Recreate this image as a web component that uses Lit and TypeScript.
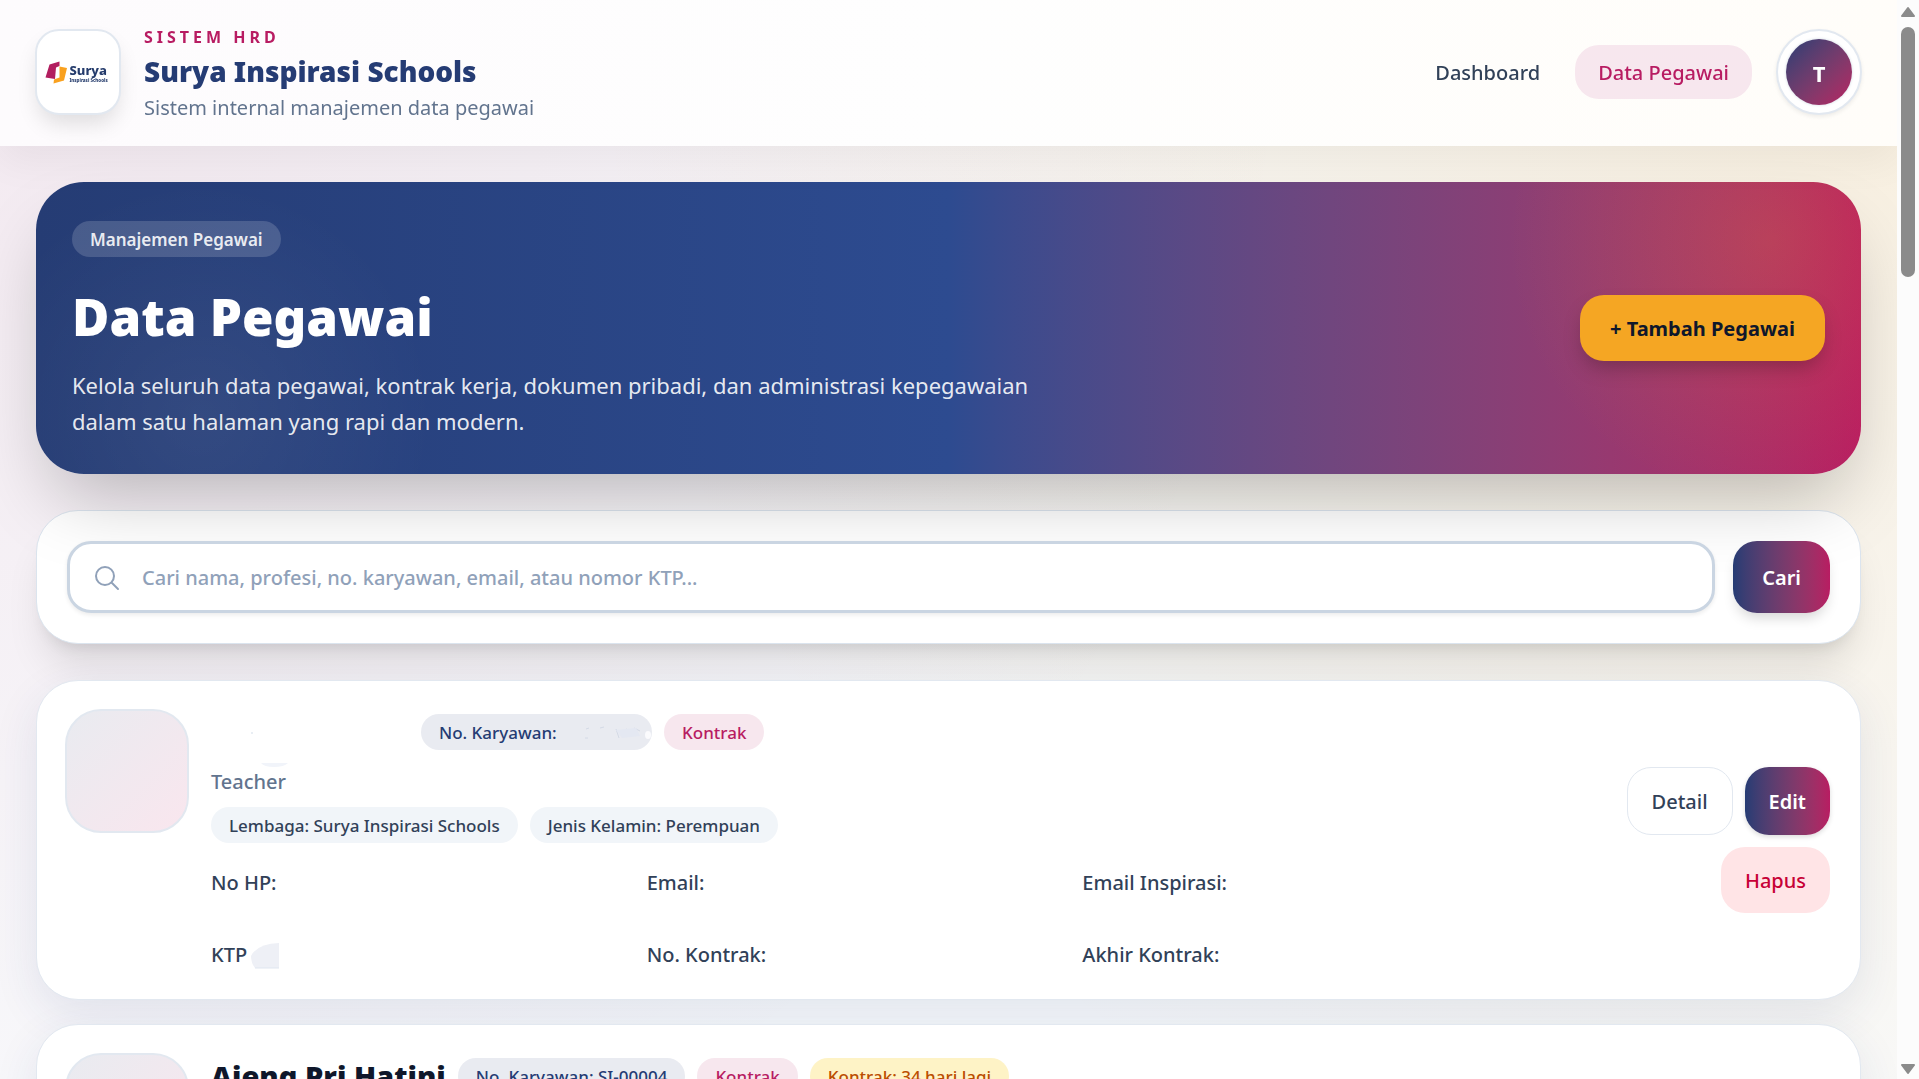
import { LitElement, html, css, svg, nothing } from "lit";
import { customElement, property } from "lit/decorators.js";
import { classMap } from "lit/directives/class-map.js";

interface Tag {
  text: string;
  tone: "navy" | "pink" | "amber" | "slate";
}

interface Employee {
  name: string;
  number: string;
  status: Tag[];
  role: string;
  tags: Tag[];
  hiddenData: boolean;
}

const EMPLOYEES: Employee[] = [
  {
    name: "",
    number: "",
    status: [{ text: "Kontrak", tone: "pink" }],
    role: "Teacher",
    tags: [
      { text: "Lembaga: Surya Inspirasi Schools", tone: "slate" },
      { text: "Jenis Kelamin: Perempuan", tone: "slate" },
    ],
    hiddenData: true,
  },
  {
    name: "Ajeng Pri Hatini",
    number: "SI-00004",
    status: [
      { text: "Kontrak", tone: "pink" },
      { text: "Kontrak: 34 hari lagi", tone: "amber" },
    ],
    role: "Teacher",
    tags: [{ text: "Lembaga: Surya Inspirasi Schools", tone: "slate" }],
    hiddenData: false,
  },
];

const shared = css`
  * {
    box-sizing: border-box;
  }
  h1,
  h2,
  p {
    margin: 0;
  }
  a {
    color: inherit;
    text-decoration: none;
  }
  button {
    font: inherit;
    border: 0;
    cursor: pointer;
  }
  .pill {
    display: inline-flex;
    align-items: center;
    height: 36px;
    padding: 1px 18px 0;
    border-radius: 18px;
    font-size: 17px;
    font-weight: 500;
    white-space: nowrap;
  }
  .navy {
    background: #e9ebf1;
    color: #253c74;
  }
  .pink {
    background: #f7e7ee;
    color: #b81c62;
  }
  .amber {
    background: #fef3c6;
    color: #bb4d00;
  }
  .slate {
    background: #f1f5f9;
    color: #314158;
  }
`;

@customElement("employee-card")
export class EmployeeCard extends LitElement {
  @property({ attribute: false }) employee!: Employee;

  static styles = [
    shared,
    css`
      :host {
        display: block;
      }
      .card {
        display: flex;
        gap: 22px;
        padding: 28px 30px 28px 28px;
        background: #fff;
        border: 1px solid #e2e8f0;
        border-radius: 42px;
        box-shadow: 0 15px 45px rgba(37, 60, 116, 0.1);
      }
      .photo {
        flex: none;
        width: 124px;
        height: 124px;
        border: 2px solid #e2e8f0;
        border-radius: 36px;
        background: linear-gradient(135deg in oklab, #e9ebf0, #f9e6ee);
      }
      .body {
        flex: 1;
        min-width: 0;
      }
      .head {
        display: flex;
        align-items: center;
        gap: 12px;
        height: 46px;
      }
      .name {
        font-size: 29px;
        line-height: 46px;
        font-weight: 900;
        color: #0f172b;
        white-space: nowrap;
      }
      .name-blank {
        width: 198px;
        align-self: flex-end;
        overflow: visible;
      }
      .smear {
        display: block;
      }
      .number-blank {
        width: 231px;
        justify-content: space-between;
        padding-right: 0;
      }
      .role {
        margin-top: 12px;
        font-size: 20px;
        line-height: 30px;
        font-weight: 500;
        color: #62748e;
      }
      .tags {
        display: flex;
        gap: 12px;
        margin-top: 10px;
      }
      .details {
        display: grid;
        grid-template-columns: repeat(3, 1fr);
        grid-template-rows: minmax(60px, auto) auto;
        gap: 12px 18px;
        margin-top: 24px;
        font-size: 20px;
        line-height: 32px;
        font-weight: 500;
        color: #314158;
      }
      .with-mark {
        display: flex;
        align-items: center;
        gap: 4px;
      }
      .actions {
        display: flex;
        flex-wrap: wrap;
        justify-content: flex-end;
        align-content: center;
        gap: 12px;
        width: 308px;
        font-size: 20px;
        font-weight: 500;
        line-height: 30px;
      }
      .btn {
        padding: 19px 24px 17px;
        border-radius: 24px;
      }
      .detail {
        border: 1px solid #e2e8f0;
        background: #fff;
        color: #314158;
      }
      .edit {
        display: flex;
        align-items: center;
        background: linear-gradient(90deg in oklab, #253c74, #b81c62);
        color: #fff;
        font-weight: 600;
        box-shadow: 0 2px 5px rgba(0, 0, 0, 0.14);
      }
      .hapus {
        background: #ffe4e6;
        color: #c70036;
      }
    `,
  ];

  render() {
    const e = this.employee;
    return html`
      <article class="card">
        <div class="photo"></div>
        <div class="body">
          <div class="head">
            ${e.name
              ? html`<h2 class="name">${e.name}</h2>`
              : html`<svg class="name-blank smear" height="30" viewBox="0 0 198 30" aria-hidden="true">
                  <circle cx="41" cy="8" r="1" fill="#e2e8f0" />
                  <path d="M50 38h27q-4 4-14 4t-13-4z" fill="#f1f4fa" />
                </svg>`}
            <span class=${classMap({ pill: true, navy: true, "number-blank": !e.number })}
              >${e.number
                ? `No. Karyawan: ${e.number}`
                : html`No. Karyawan:
                    <svg class="smear" width="80" height="24" viewBox="0 0 80 24" aria-hidden="true">
                      <path
                        d="M14 8l3-1M28 7l4-1M13 17l3 0M44 8l3 9M54 8l4 2M62 7l6 3"
                        stroke="#d4dae6"
                        stroke-width="1"
                      />
                      <path d="M44 9l20-2 4 8-18 2z" fill="#e4e8f2" />
                      <ellipse cx="76" cy="14" rx="3" ry="4" fill="#fbfbfd" />
                    </svg>`}</span
            >
            ${e.status.map((t) => html`<span class="pill ${t.tone}">${t.text}</span>`)}
          </div>
          <p class="role">${e.role}</p>
          <div class="tags">${e.tags.map((t) => html`<span class="pill ${t.tone}">${t.text}</span>`)}</div>
          <div class="details">
            <div>No HP:</div>
            <div>Email:</div>
            <div>Email Inspirasi:</div>
            <div class="with-mark">
              KTP${e.hiddenData
                ? html`<svg class="smear" width="29" height="28" viewBox="0 0 29 28" aria-hidden="true">
                    <path d="M0 15Q6 3 28 2V27H4Q0 22 0 15z" fill="#eef0f6" />
                    <path d="M4 27h24" stroke="#dfe6f0" />
                  </svg>`
                : nothing}
            </div>
            <div>No. Kontrak:</div>
            <div>Akhir Kontrak:</div>
          </div>
        </div>
        <div class="actions">
          <a class="btn detail" href="#detail">Detail</a>
          <a class="btn edit" href="#edit">Edit</a>
          <button class="btn hapus" type="button">Hapus</button>
        </div>
      </article>
    `;
  }
}

@customElement("app-root")
export class AppRoot extends LitElement {
  static styles = [
    shared,
    css`
      :host {
        display: grid;
        grid-template-columns: minmax(0, 1fr) 22px;
        height: 100vh;
        overflow: hidden;
        font-family: "Noto Sans", "Open Sans", sans-serif;
        color: #314158;
      }
      .page {
        height: 100vh;
        overflow-y: auto;
        scrollbar-width: none;
        background: radial-gradient(circle at 0 0, rgba(184, 28, 98, 0.08), transparent 60%),
          radial-gradient(circle at 100% 0, rgba(245, 166, 35, 0.14), transparent 60%), #f8fafc;
      }
      .topbar {
        position: sticky;
        top: 0;
        z-index: 5;
        display: flex;
        align-items: center;
        justify-content: space-between;
        height: 146px;
        padding: 0 35px 2px;
        background: linear-gradient(90deg, #fdfbfd, #fefefe 50%, #fffdf9);
        box-shadow: 0 15px 38px rgba(0, 0, 0, 0.05);
      }
      .brand {
        display: flex;
        align-items: center;
        gap: 23px;
      }
      .brand-text {
        padding-top: 4px;
      }
      .logo {
        display: grid;
        place-items: center;
        width: 86px;
        height: 86px;
        border: 2px solid #e2e8f0;
        border-radius: 24px;
        background: #fff;
        box-shadow: 0 12px 22px -4px rgba(0, 0, 0, 0.13);
      }
      .eyebrow {
        font-size: 16px;
        line-height: 24px;
        font-weight: 700;
        letter-spacing: 4px;
        color: #b81c62;
      }
      .title {
        font-size: 28px;
        line-height: 44px;
        font-weight: 900;
        color: #253c74;
      }
      .tagline {
        font-size: 20px;
        line-height: 30px;
        color: #62748e;
      }
      .nav {
        display: flex;
        align-items: center;
        gap: 12px;
        font-size: 20px;
        font-weight: 500;
      }
      .link {
        padding: 13px 23px 11px;
        border-radius: 24px;
        line-height: 30px;
      }
      .avatar {
        display: grid;
        place-items: center;
        width: 86px;
        height: 86px;
        margin-left: 12px;
        padding: 0;
        border: 2px solid #e2e8f0;
        border-radius: 50%;
        background: #fff;
        box-shadow: 0 2px 4px rgba(0, 0, 0, 0.07);
      }
      .initial {
        display: grid;
        place-items: center;
        width: 66px;
        height: 66px;
        padding-top: 2px;
        border-radius: 50%;
        background: linear-gradient(135deg in oklab, #253c74, #b81c62);
        box-shadow: 0 0 3px #cbd5e1;
        color: #fff;
        font-size: 22px;
        font-weight: 700;
      }
      .main {
        display: flex;
        flex-direction: column;
        gap: 36px;
        padding: 36px;
      }
      .hero {
        position: relative;
        display: flex;
        align-items: center;
        justify-content: space-between;
        padding: 0 36px;
        border-radius: 48px;
        background: radial-gradient(circle at 95% 20%, rgba(245, 166, 35, 0.18), transparent 15%),
          radial-gradient(circle at 9% 80%, rgba(255, 255, 255, 0.06), transparent 14%),
          linear-gradient(90deg in oklab, #253c74, #2d4b90 50%, #b81c62);
        box-shadow: 0 38px 75px -18px rgba(0, 0, 0, 0.25);
      }
      .intro {
        display: flex;
        flex-direction: column;
        align-items: flex-start;
        padding: 39px 0 35px;
      }
      .badge {
        background: rgba(255, 255, 255, 0.16);
        color: rgba(255, 255, 255, 0.9);
        font-weight: 600;
      }
      .heading {
        margin-top: 21px;
        font-size: 51px;
        line-height: 76px;
        font-weight: 900;
        color: #fff;
      }
      .lead {
        max-width: 984px;
        margin-top: 13px;
        font-size: 22px;
        line-height: 36px;
        color: rgba(255, 255, 255, 0.9);
      }
      .add {
        padding: 19px 30px 17px;
        border-radius: 24px;
        background: #f5a623;
        box-shadow: 0 10px 20px -4px rgba(0, 0, 0, 0.25);
        color: #0f172b;
        font-size: 20px;
        line-height: 30px;
        font-weight: 700;
        white-space: nowrap;
      }
      .search {
        display: flex;
        gap: 18px;
        padding: 30px;
        border: 1px solid #dbe4ee;
        border-radius: 42px;
        background: #fff;
        box-shadow: 0 30px 38px -8px rgba(0, 0, 0, 0.1), 0 12px 15px -9px rgba(0, 0, 0, 0.1);
      }
      .field {
        position: relative;
        display: flex;
        flex: 1;
        align-items: center;
        gap: 22px;
        height: 72px;
        padding: 1px 24px 0;
        border: 3px solid #cad5e2;
        border-radius: 24px;
        background: #fff;
        box-shadow: 0 2px 4px rgba(0, 0, 0, 0.08);
      }
      .query {
        flex: 1;
        padding: 0;
        border: 0;
        outline: 0;
        background: none;
        font: inherit;
        font-size: 20px;
        font-weight: 500;
        color: #314158;
      }
      .query::placeholder {
        color: #90a1b9;
        opacity: 1;
      }
      .go {
        position: relative;
        padding: 1px 29px 0;
        border-radius: 24px;
        background: linear-gradient(90deg in oklab, #253c74, #b81c62);
        box-shadow: 0 8px 14px -4px rgba(0, 0, 0, 0.18);
        color: #fff;
        font-size: 20px;
        font-weight: 600;
      }
      .list {
        display: flex;
        flex-direction: column;
        gap: 24px;
      }
      .scrollbar {
        display: flex;
        flex-direction: column;
        align-items: center;
        padding: 6px 0 4px;
        background: #fcfcfc;
      }
      .thumb {
        width: 14px;
        height: 250px;
        margin: 9px 0 auto;
        border-radius: 7px;
        background: #8b8b8b;
      }
    `,
  ];

  private logo() {
    return html`<svg width="68" height="28" viewBox="0 0 136 56" role="img" aria-label="Surya Inspirasi Schools">
      ${svg`
        <path d="M11 13L31 7V16L24 19L22 42L3 39Z" fill="#b21e5f" />
        <path d="M31 17L46 20L40 45L19 51L20 43L31 39Z" fill="#f9a11f" />
        <text x="51" y="33" font-size="26" font-weight="800" fill="#253c6c">Surya</text>
        <text x="51" y="48" font-size="9" font-weight="800" fill="#253c6c">Inspirasi Schools</text>
      `}
    </svg>`;
  }

  render() {
    return html`
      <div class="page">
        <header class="topbar">
          <div class="brand">
            <div class="logo">${this.logo()}</div>
            <div class="brand-text">
              <p class="eyebrow">SISTEM HRD</p>
              <p class="title">Surya Inspirasi Schools</p>
              <p class="tagline">Sistem internal manajemen data pegawai</p>
            </div>
          </div>
          <nav class="nav">
            <a class="link" href="#dashboard">Dashboard</a>
            <a class="link pink" href="#pegawai">Data Pegawai</a>
            <button class="avatar" type="button"><span class="initial">T</span></button>
          </nav>
        </header>
        <main class="main">
          <section class="hero">
            <div class="intro">
              <span class="pill badge">Manajemen Pegawai</span>
              <h1 class="heading">Data Pegawai</h1>
              <p class="lead">
                Kelola seluruh data pegawai, kontrak kerja, dokumen pribadi, dan administrasi kepegawaian dalam satu
                halaman yang rapi dan modern.
              </p>
            </div>
            <a class="add" href="#tambah">+ Tambah Pegawai</a>
          </section>
          <form class="search" @submit=${(ev: Event) => ev.preventDefault()}>
            <label class="field">
              <svg width="26" height="26" viewBox="0 0 26 26" fill="none" stroke="#90a1b9" stroke-width="2" stroke-linecap="round" aria-hidden="true">
                <circle cx="11" cy="11" r="9" />
                <path d="M18 18l6 6" />
              </svg>
              <input
                class="query"
                type="text"
                aria-label="Cari pegawai"
                placeholder="Cari nama, profesi, no. karyawan, email, atau nomor KTP..."
              />
            </label>
            <button class="go" type="submit">Cari</button>
          </form>
          <section class="list">
            ${EMPLOYEES.map((e) => html`<employee-card .employee=${e}></employee-card>`)}
          </section>
        </main>
      </div>
      <div class="scrollbar" aria-hidden="true">
        <svg width="14" height="12" viewBox="0 0 14 12"><path d="M7 2L13 10H1z" fill="#8b8b8b" stroke="#8b8b8b" stroke-width="2" stroke-linejoin="round" /></svg>
        <div class="thumb"></div>
        <svg width="14" height="12" viewBox="0 0 14 12"><path d="M7 10L13 2H1z" fill="#8b8b8b" stroke="#8b8b8b" stroke-width="2" stroke-linejoin="round" /></svg>
      </div>
    `;
  }
}
